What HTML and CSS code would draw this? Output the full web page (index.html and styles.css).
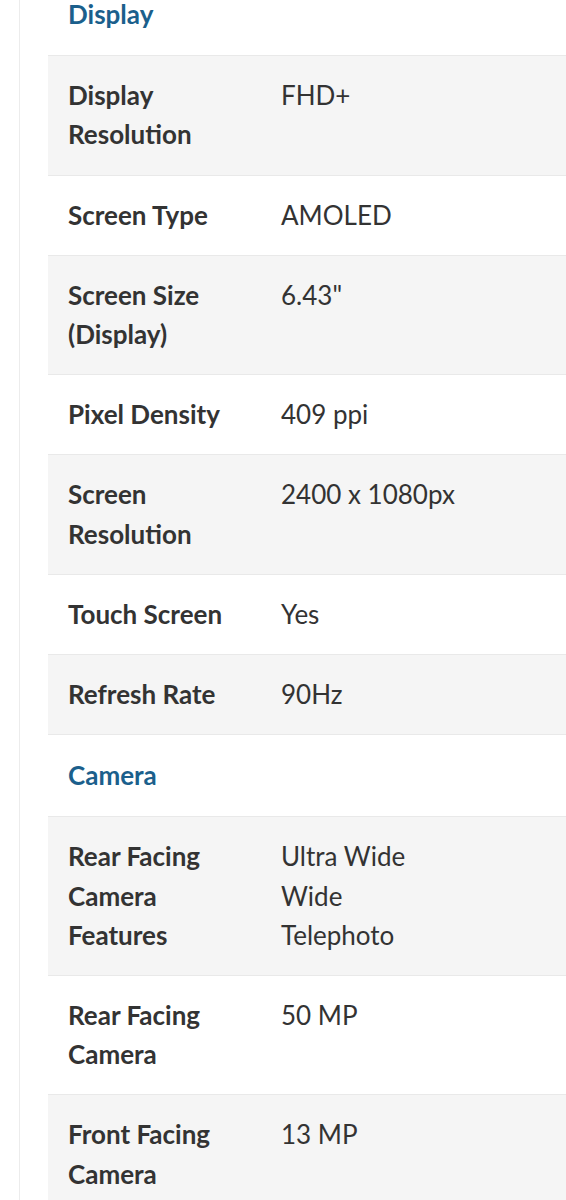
FILE: index.html
```html
<!DOCTYPE html>
<html>
<head>
<meta charset="utf-8">
<link rel="stylesheet" href="styles.css">
</head>
<body>
<div class="page">
  <div class="content">
    <table class="specs">
      <tr class="group"><th colspan="2">Display</th></tr>
      <tr class="odd"><td class="label">Display<br>Resolution</td><td class="value">FHD+</td></tr>
      <tr><td class="label">Screen Type</td><td class="value">AMOLED</td></tr>
      <tr class="odd"><td class="label">Screen Size<br>(Display)</td><td class="value">6.43"</td></tr>
      <tr><td class="label">Pixel Density</td><td class="value">409 ppi</td></tr>
      <tr class="odd"><td class="label">Screen<br>Resolution</td><td class="value">2400 x 1080px</td></tr>
      <tr><td class="label">Touch Screen</td><td class="value">Yes</td></tr>
      <tr class="odd"><td class="label">Refresh Rate</td><td class="value">90Hz</td></tr>
      <tr class="group"><th colspan="2">Camera</th></tr>
      <tr class="odd"><td class="label">Rear Facing<br>Camera<br>Features</td><td class="value">Ultra Wide<br>Wide<br>Telephoto</td></tr>
      <tr><td class="label">Rear Facing<br>Camera</td><td class="value">50 MP</td></tr>
      <tr class="odd"><td class="label">Front Facing<br>Camera</td><td class="value">13 MP</td></tr>
    </table>
  </div>
</div>
</body>
</html>
```
FILE: styles.css
```css
html, body {
  margin: 0;
  padding: 0;
  background: #ffffff;
}
body {
  font-family: Lato, "Open Sans", sans-serif;
  color: #333333;
  overflow: hidden;
}
.page {
  padding-left: 19px;
}
.content {
  border-left: 1px solid #ececec;
  padding-left: 28px;
  min-height: 1200px;
}
.specs {
  width: 100%;
  border-collapse: collapse;
  margin-top: -26px;
}
.specs td, .specs th {
  padding: 20px 20px;
  line-height: 39.2px;
  font-size: 26px;
  vertical-align: top;
  text-align: left;
  border-bottom: 1px solid #e9e9e9;
}
.specs th {
  padding-top: 21px;
  padding-bottom: 21px;
  font-weight: 700;
  color: #1b5f8c;
}
.specs tr.odd td {
  background: #f5f5f5;
}
.label {
  width: 173px;
  font-weight: 700;
  color: #333333;
}
.value {
  font-weight: 400;
  color: #333333;
}
```
